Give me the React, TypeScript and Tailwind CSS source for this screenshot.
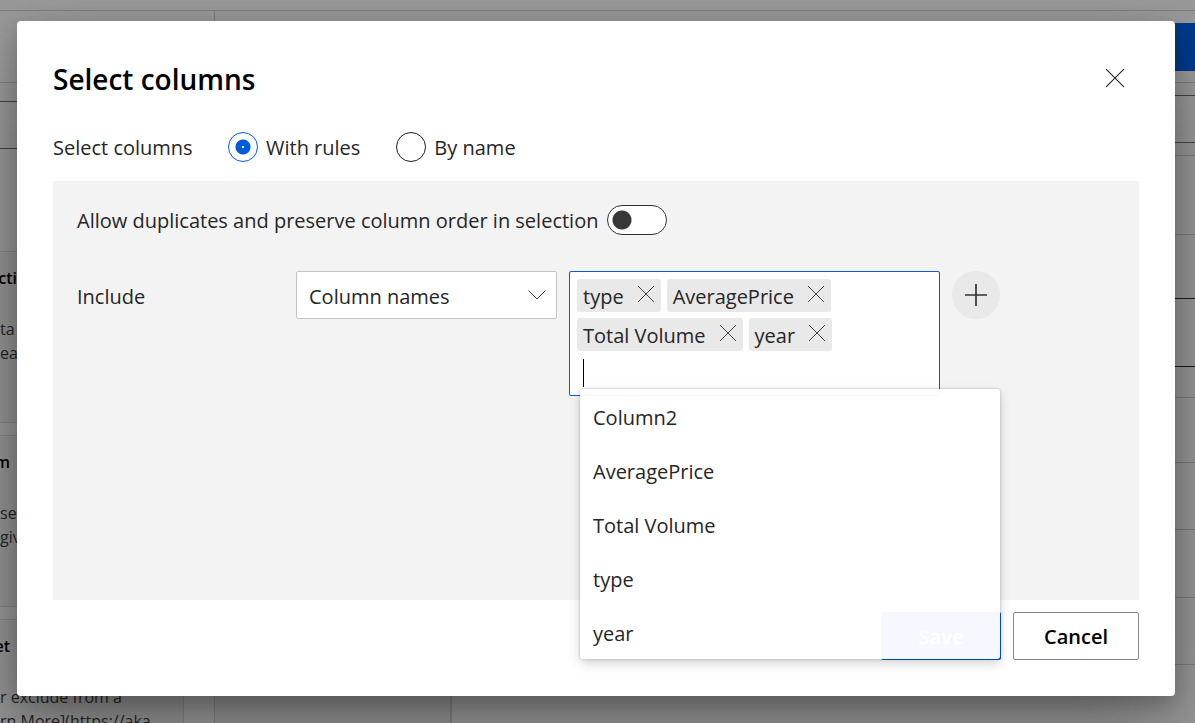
import { useState } from "react";

const columns = ["Column2", "AveragePrice", "Total Volume", "type", "year"];

const assets = [
  { title: "cti", titleWidth: "w-[17px]", lines: ["ta", "ear"] },
  { title: "m", titleWidth: "w-[10px]", lines: ["se", "give"] },
  { title: "et", titleWidth: "w-[10px]", lines: ["r exclude from a", "rn More](https://aka"] },
];

function Cross({ className }: { className: string }) {
  return (
    <svg viewBox="0 0 18 18" className={className} fill="none" stroke="currentColor" aria-hidden="true">
      <path d="M1 1 17 17M17 1 1 17" />
    </svg>
  );
}

function Backdrop() {
  return (
    <div className="absolute inset-0 flex flex-col overflow-hidden bg-[#999]" aria-hidden="true">
      <div className="h-[11px] shrink-0 border-b border-[#7e7e7e]" />
      <div className="flex min-h-0 grow">
        <div className="flex w-[215px] shrink-0 flex-col border-r border-[#7e7e7e]">
          <div className="h-[72px] shrink-0 border-b border-[#808080]" />
          <div className="mt-[18px] h-12 shrink-0 border-y border-[#444]" />
          <div className="mt-[102px] flex flex-col gap-3">
            {assets.map((a) => (
              <div
                key={a.title}
                className="mr-[30px] h-[172px] shrink-0 border-y border-r border-[#868686] bg-[#949494]"
              >
                <div className={a.titleWidth}>
                  <p className="mt-3 flex justify-end text-base leading-7 font-semibold text-black">{a.title}</p>
                </div>
                <div className="mt-[25px] flex flex-col text-base leading-6 whitespace-nowrap text-[#262626]">
                  {a.lines.map((l) => (
                    <span key={l}>{l}</span>
                  ))}
                </div>
              </div>
            ))}
          </div>
        </div>
        <div className="flex w-[237px] shrink-0 flex-col">
          <div className="h-[72px] shrink-0 border-b border-[#808080]" />
          <div className="grow border-r-2 border-[#808080] bg-[#949494]" />
        </div>
        <div className="flex grow flex-col">
          <div className="mt-3 h-12 shrink-0 bg-[#003a8c]" />
          <div className="h-3 shrink-0 border-b border-[#7c7c7c]" />
          <div className="mt-3 h-12 shrink-0 border-y border-[#444]" />
          <div className="h-[13px] shrink-0 border-b border-[#7c7c7c]" />
          <div className="h-[79px] shrink-0 border-b border-[#7c7c7c]" />
          <div className="mt-[63px] h-[69px] shrink-0 border-y border-[#1c1c1c]" />
          <div className="h-[31px] shrink-0 border-b border-[#7c7c7c]" />
          <div className="h-[65px] shrink-0 border-b border-[#7c7c7c]" />
          <div className="h-[67px] shrink-0 border-b border-[#7c7c7c]" />
          <div className="h-[68px] shrink-0 border-b border-[#7c7c7c]" />
          <div className="h-[67px] shrink-0 border-b border-[#7c7c7c]" />
        </div>
      </div>
    </div>
  );
}

const radioStyle =
  "size-[30px] appearance-none rounded-full border border-[#1f1f1f] bg-white checked:border-[#015cda] checked:bg-[radial-gradient(circle,white_1px,#015cda_1px,#015cda_7px,white_8px)]";

export default function App() {
  const [mode, setMode] = useState("rules");
  const [ordered, setOrdered] = useState(false);
  const [picked, setPicked] = useState(["type", "AveragePrice", "Total Volume", "year"]);

  return (
    <div className="relative min-h-screen overflow-hidden font-['Open_Sans','Noto_Sans',sans-serif] text-xl text-[#262626]">
      <Backdrop />
      <div className="relative pt-[21px] pr-5 pb-[27px] pl-[17px]">
        <section
          role="dialog"
          aria-labelledby="dialog-title"
          className="rounded-sm bg-white px-9 pt-9 pb-9 shadow-[0_38px_86px_rgba(0,0,0,0.28),0_8px_22px_rgba(0,0,0,0.24)]"
        >
          <header className="flex h-11 items-center justify-between">
            <h1 id="dialog-title" className="pt-[2px] text-[28px] font-semibold text-black">
              Select columns
            </h1>
            <button type="button" aria-label="Close" className="mr-[14px] mb-[2px] flex text-[#222]">
              <Cross className="size-5" />
            </button>
          </header>

          <div role="radiogroup" aria-labelledby="mode-label" className="mt-7 flex h-9 items-center">
            <span id="mode-label" className="w-[175px] pt-[2px]">
              Select columns
            </span>
            <label className="flex items-center gap-2">
              <input
                type="radio"
                name="mode"
                checked={mode === "rules"}
                onChange={() => setMode("rules")}
                className={radioStyle}
              />
              <span className="pt-[2px]">With rules</span>
            </label>
            <label className="ml-9 flex items-center gap-2">
              <input
                type="radio"
                name="mode"
                checked={mode === "name"}
                onChange={() => setMode("name")}
                className={radioStyle}
              />
              <span className="pt-[2px]">By name</span>
            </label>
          </div>

          <div className="mt-4 min-h-[419px] bg-[#f3f3f3] px-6 pt-6">
            <label className="flex h-[30px] items-center gap-[9px]">
              <span className="pt-[2px]">Allow duplicates and preserve column order in selection</span>
              <input
                type="checkbox"
                role="switch"
                checked={ordered}
                onChange={() => setOrdered(!ordered)}
                className="h-[30px] w-[60px] appearance-none rounded-full border border-[#333] bg-white bg-[radial-gradient(circle_at_14px_14px,#373737_9px,transparent_10px)] checked:bg-[radial-gradient(circle_at_44px_14px,#015cda_9px,transparent_10px)]"
              />
            </label>

            <div className="mt-9 flex items-start">
              <label htmlFor="include-kind" className="flex h-[52px] w-[219px] items-center">
                Include
              </label>
              <div className="relative">
                <select
                  id="include-kind"
                  className="h-12 w-[261px] appearance-none rounded-xs border border-[#c4c4c4] bg-white px-3 pt-1"
                >
                  <option>Column names</option>
                  <option>Column types</option>
                </select>
                <svg
                  viewBox="0 0 18 10"
                  className="pointer-events-none absolute top-[19px] right-[11px] h-[10px] w-[18px]"
                  fill="none"
                  stroke="#444"
                  aria-hidden="true"
                >
                  <path d="M0.5 0.5 9 9 17.5 0.5" />
                </svg>
              </div>

              <div className="relative ml-3">
                <div className="flex w-[371px] flex-wrap gap-[6px] rounded-xs border border-[#015cda] bg-white pt-[7px] pr-20 pb-[5px] pl-[7px]">
                  {picked.map((name) => (
                    <span key={name} className="flex h-[33px] items-center gap-[13px] rounded-[3px] bg-[#e9e9e9] px-[6px]">
                      <span className="pt-[2px]">{name}</span>
                      <button
                        type="button"
                        aria-label={`Remove ${name}`}
                        onClick={() => setPicked(picked.filter((p) => p !== name))}
                        className="mb-[3px] flex text-[#444]"
                      >
                        <Cross className="size-[18px]" />
                      </button>
                    </span>
                  ))}
                  <div className="flex h-[33px] w-full items-center pb-[2px] pl-[6px]">
                    <span className="h-7 w-px bg-black" />
                    <input
                      type="text"
                      aria-label="Add column name"
                      className="h-7 min-w-0 grow caret-transparent outline-none"
                    />
                  </div>
                </div>
                <ul
                  role="listbox"
                  aria-label="Columns"
                  className="absolute top-[118px] left-[11px] z-10 w-[420px] rounded-[3px] bg-white/96 shadow-[0_5px_12px_rgba(0,0,0,0.16),0_0_3px_rgba(0,0,0,0.24)]"
                >
                  {columns.map((c) => (
                    <li
                      key={c}
                      role="option"
                      aria-selected={picked.includes(c)}
                      className="flex h-[54px] items-center px-[13px] pt-1"
                    >
                      {c}
                    </li>
                  ))}
                </ul>
              </div>

              <button
                type="button"
                aria-label="Add rule"
                className="ml-3 flex size-12 items-center justify-center rounded-full bg-[#e9e9e9]"
              >
                <svg viewBox="0 0 24 24" className="size-6" stroke="#333" strokeWidth="1.7" aria-hidden="true">
                  <path d="M12 1v22M1 12h22" />
                </svg>
              </button>
            </div>
          </div>

          <footer className="mt-3 flex justify-end gap-3 font-semibold">
            <button type="button" className="h-12 w-[120px] rounded-xs bg-[#015cda] pt-[2px] text-white">
              Save
            </button>
            <button type="button" className="h-12 w-[126px] rounded-xs border border-[#8a8a8a] bg-white pt-[2px] text-black">
              Cancel
            </button>
          </footer>
        </section>
      </div>
    </div>
  );
}
